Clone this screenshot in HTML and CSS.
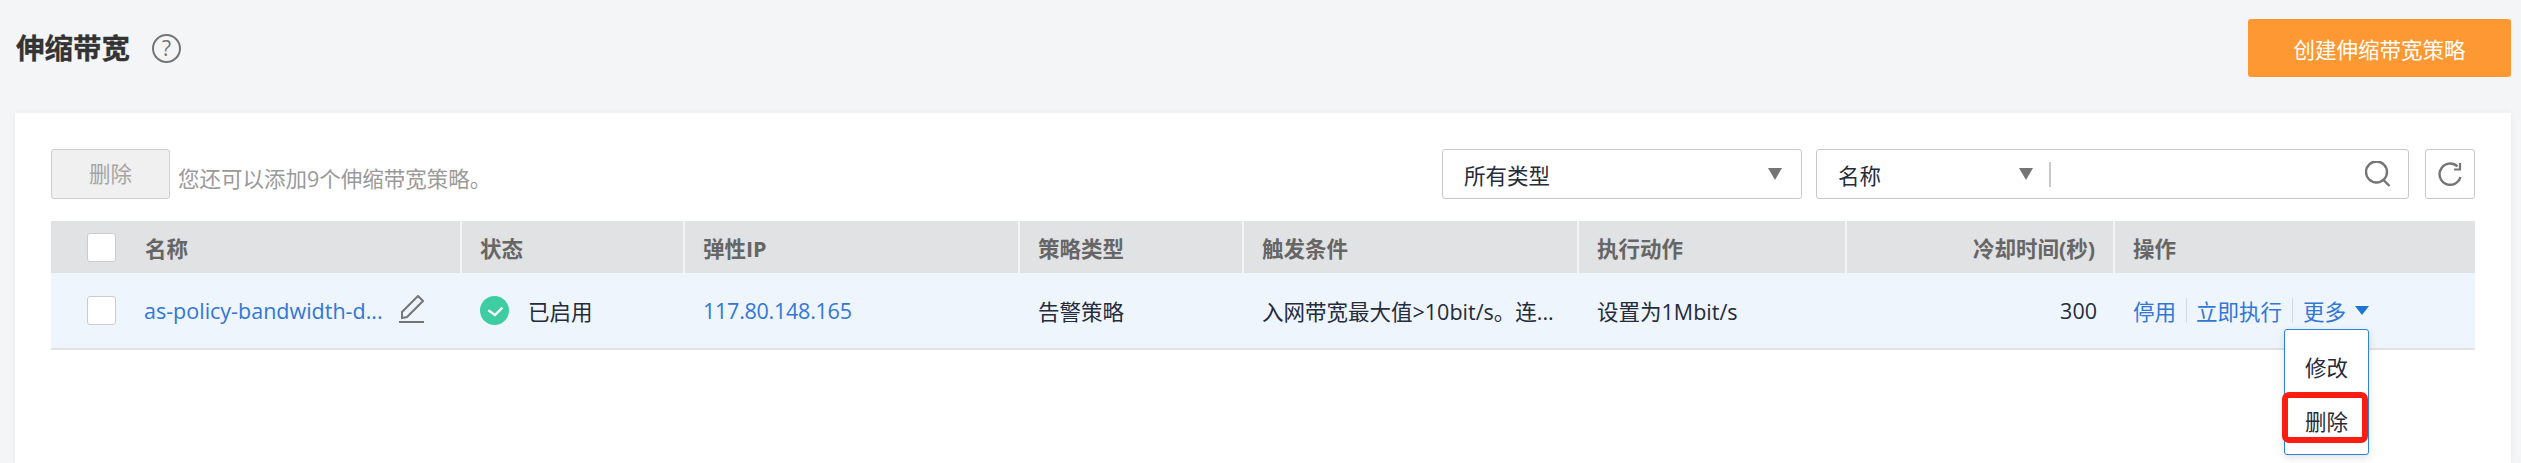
FILE: index.html
```html
<!DOCTYPE html>
<html lang="zh-CN">
<head>
<meta charset="utf-8">
<title>伸缩带宽</title>
<link rel="stylesheet" href="styles.css">
</head>
<body>
<header class="page-head">
  <div class="title-wrap">
    <h1 class="title">伸缩带宽</h1>
    <span class="help">?</span>
  </div>
  <button class="btn-create">创建伸缩带宽策略</button>
</header>
<main class="card">
  <div class="toolbar">
    <button class="btn-delete"><span class="btn-delete-label">删除</span></button>
    <span class="hint">您还可以添加9个伸缩带宽策略。</span>
    <div class="filters">
      <div class="select select-type"><span>所有类型</span><i class="caret"></i></div>
      <div class="search">
        <div class="select-name"><span>名称</span><i class="caret"></i></div>
        <i class="search-divider"></i>
        <svg class="search-icon" viewBox="0 0 26 26" width="26" height="26"><circle cx="11.5" cy="11" r="10.5" fill="none" stroke="#757575" stroke-width="2.4"/><path d="M18.5 19l6 6" fill="none" stroke="#757575" stroke-width="2.4"/></svg>
      </div>
      <div class="refresh">
        <svg viewBox="0 0 24 24" width="24" height="24"><path d="M22.4 15A10.6 10.6 0 1 1 19.5 4.5" fill="none" stroke="#757575" stroke-width="2.4"/><path d="M22 1v6.5h-6" fill="none" stroke="#757575" stroke-width="2.2"/></svg>
      </div>
    </div>
  </div>
  <table class="grid">
    <colgroup>
      <col class="c-name"><col class="c-status"><col class="c-ip"><col class="c-type"><col class="c-cond"><col class="c-act"><col class="c-cool"><col class="c-ops">
    </colgroup>
    <thead>
      <tr>
        <th><div class="name-cell"><i class="check"></i><span class="name-head">名称</span></div></th>
        <th>状态</th>
        <th>弹性IP</th>
        <th>策略类型</th>
        <th>触发条件</th>
        <th>执行动作</th>
        <th class="right">冷却时间(秒)</th>
        <th>操作</th>
      </tr>
    </thead>
    <tbody>
      <tr>
        <td>
          <div class="name-cell">
            <i class="check"></i>
            <a class="link">as-policy-bandwidth-d...</a>
            <svg class="edit" viewBox="0 0 25 28" width="25" height="28"><path d="M19 1l5 5L8 22l-5 1v-6z" fill="none" stroke="#757575" stroke-width="2"/><path d="M0 27h25" stroke="#757575" stroke-width="2"/></svg>
          </div>
        </td>
        <td>
          <div class="status">
            <svg viewBox="0 0 29 29" width="29" height="29"><circle cx="14.5" cy="14.5" r="14.5" fill="#3ecca3"/><path d="M8.3 14.3L15 19l7.3-7.3" fill="none" stroke="#fff" stroke-width="2.4"/></svg>
            <span>已启用</span>
          </div>
        </td>
        <td><a class="link ip">117.80.148.165</a></td>
        <td>告警策略</td>
        <td>入网带宽最大值&gt;10bit/s。连...</td>
        <td>设置为1Mbit/s</td>
        <td class="right">300</td>
        <td>
          <div class="ops">
            <a class="link">停用</a><i class="sep"></i><a class="link">立即执行</a><i class="sep"></i>
            <div class="more">
              <a class="link">更多</a><i class="caret-blue"></i>
              <ul class="menu">
                <li>修改</li>
                <li class="marked">删除<i class="red-box"></i></li>
              </ul>
            </div>
          </div>
        </td>
      </tr>
    </tbody>
  </table>
</main>
</body>
</html>
```
FILE: styles.css
```css
* { box-sizing: border-box; }
html, body { margin: 0; height: 463px; overflow: hidden; }
body {
  display: flex;
  flex-direction: column;
  padding: 0 10px 0 15px;
  background: #f3f5f7;
  color: #252b3a;
  font-family: "Open Sans", "Noto Sans CJK SC", sans-serif;
  font-size: 21.5px;
}
.page-head {
  display: flex;
  align-items: center;
  justify-content: space-between;
  height: 96px;
  margin-bottom: 17px;
  flex: none;
}
.title-wrap { display: flex; align-items: center; gap: 22px; padding-left: 1px; }
.title { margin: 0; font-size: 28.5px; font-weight: 700; color: #333; line-height: 40px; -webkit-text-stroke: .3px #333; }
.help {
  width: 29px; height: 29px;
  display: flex; align-items: center; justify-content: center;
  border: 2px solid #757575; border-radius: 50%;
  color: #757575; font-size: 21px; line-height: 1;
}
.btn-create {
  width: 263px; height: 58px;
  border: 0; border-radius: 3px;
  background: #fe9832; color: #fff;
  font: inherit; padding: 0;
}
.card {
  flex: 1;
  background: #fff;
  padding: 36px;
  box-shadow: 0 0 6px rgba(0, 0, 0, .06);
}
.toolbar { display: flex; height: 50px; margin-bottom: 22px; }
.btn-delete {
  width: 119px; height: 50px; padding: 0 0 3px;
  background: #f0f0f0; border: 1px solid #cfcfcf; border-radius: 3px;
  color: #a5a5a5; font: inherit;
}
.hint { margin: 14px 0 0 8px; color: #9a9a9a; line-height: 32px; }
.filters { margin-left: auto; display: flex; }
.select, .search, .refresh {
  height: 50px;
  background: #fff;
  border: 1px solid #c9c9c9;
  border-radius: 3px;
  display: flex;
  align-items: center;
}
.select-type { width: 360px; padding: 0 19px 0 21px; justify-content: space-between; margin-right: 14px; }
.search { width: 593px; padding: 0 17px 0 21px; margin-right: 16px; }
.select-name { width: 195px; display: flex; align-items: center; justify-content: space-between; }
.caret {
  width: 0; height: 0;
  border-left: 7px solid transparent;
  border-right: 7px solid transparent;
  border-top: 12px solid #757575;
}
.search-divider { width: 2px; height: 25px; background: #c9c9c9; margin-left: 16px; }
.search-icon { margin-left: auto; }
.refresh { width: 50px; justify-content: center; }
.grid { width: 2424px; border-collapse: collapse; table-layout: fixed; }
.c-name { width: 410px; }
.c-status { width: 223px; }
.c-ip { width: 335px; }
.c-type { width: 224px; }
.c-cond { width: 335px; }
.c-act { width: 268px; }
.c-cool { width: 268px; }
.c-ops { width: 361px; }
th, td { padding: 0 18px; text-align: left; white-space: nowrap; }
th {
  height: 52px;
  background: #e0e2e3;
  color: #666;
  font-weight: 700;
  border-left: 2px solid #f4f5f5;
}
th:first-child { border-left: 0; padding-left: 36px; }
td {
  height: 76px;
  background: #eef5fd;
  border-bottom: 2px solid #e0e2e3;
  padding-left: 19px;
}
td:first-child { padding-left: 36px; }
th.right, td.right { text-align: right; padding-right: 18px; }
td.right { padding-right: 17px; }
.name-cell { display: flex; align-items: center; }
.name-head { margin-left: 1px; }
.check {
  width: 29px; height: 29px; flex: none;
  background: #fff; border: 1px solid #ccc; border-radius: 3px;
  margin-right: 28px;
}
.link { color: #3277d6; }
.ip { letter-spacing: -.25px; }
.edit { margin-left: 16px; margin-top: -3px; }
.status { display: flex; align-items: center; gap: 19px; }
.ops { display: flex; align-items: center; }
.sep { width: 1px; height: 25px; background: #d5dbe2; margin: 0 9px 0 10px; }
.more { position: relative; display: flex; align-items: center; margin-left: 1px; }
.caret-blue {
  width: 0; height: 0; margin-left: 9px;
  border-left: 7.5px solid transparent;
  border-right: 7.5px solid transparent;
  border-top: 9px solid #1c74d4;
}
.menu {
  position: absolute;
  top: 34px; right: 0;
  width: 85px; height: 126px;
  margin: 0; padding: 11px 0 0;
  list-style: none;
  background: #fff;
  border: 1px solid #2d83dc;
  border-radius: 3px;
  box-shadow: 0 3px 8px rgba(0, 0, 0, .12);
}
.menu li { height: 54px; line-height: 54px; text-align: center; position: relative; }
.red-box {
  position: absolute;
  left: -3px; top: -3px;
  width: 86px; height: 51px;
  border: 6px solid #fb1d10;
  border-radius: 7px;
}
```
